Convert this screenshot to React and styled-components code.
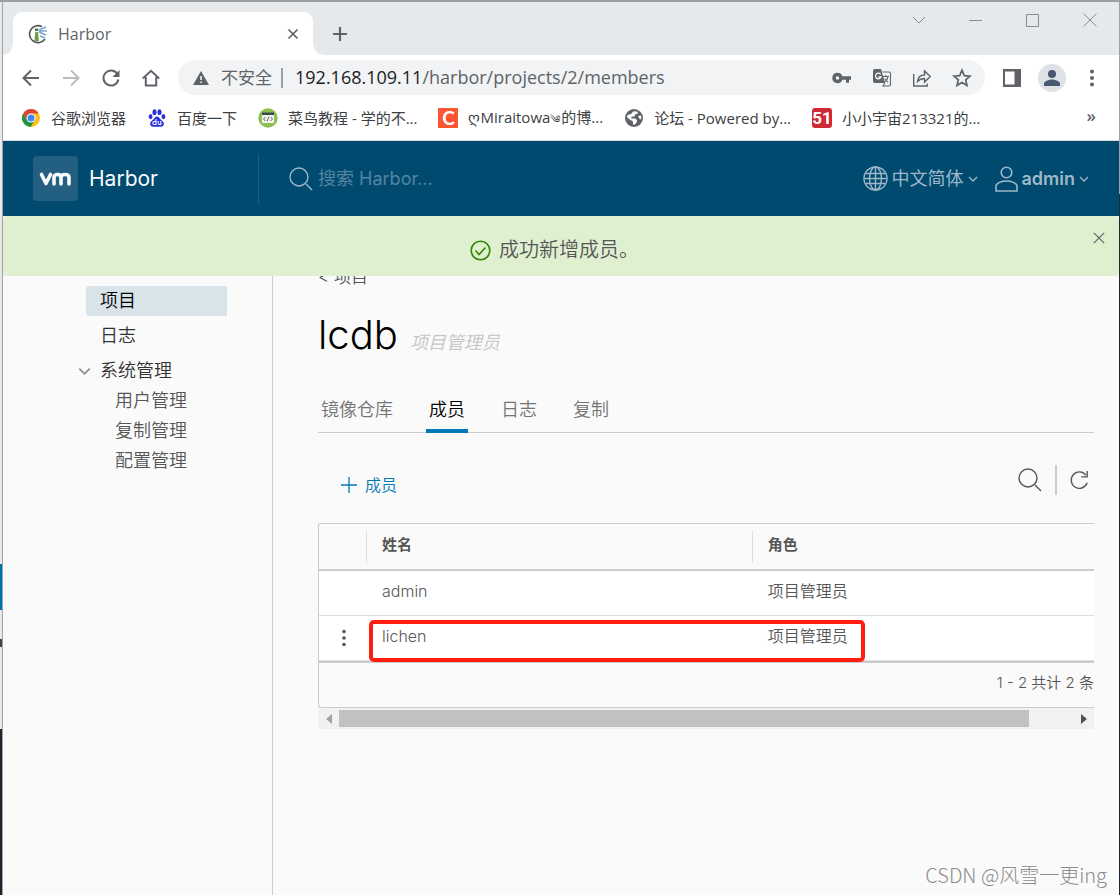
import React from "react";
import styled, { createGlobalStyle, css } from "styled-components";

const ui = '"Open Sans", "Noto Sans CJK SC", sans-serif';
const brand = 'Inter, "Noto Sans CJK SC", sans-serif';

const GlobalStyle = createGlobalStyle`
  *, *::before, *::after { box-sizing: border-box; }
  body { margin: 0; background: #fafafa; font-family: ${brand}; }
  button { font: inherit; color: inherit; background: none; border: 0; padding: 0; }
  a { color: inherit; text-decoration: none; }
  svg { display: block; flex: none; }
`;

const Desktop = styled.div`
  position: relative;
  display: flex;
  min-height: 100vh;
  border-top: 2px solid #9f9f9f;
  overflow: hidden;
`;

const Behind = styled.div`
  width: 3px;
  flex: none;
  border-right: 1px solid #a3a3a3;
  background: linear-gradient(
    #e8e8e8 562px, #0072ab 562px, #0072ab 608px, #e8e8e8 608px,
    #e8e8e8 637px, #444 637px, #444 645px, #e8e8e8 645px,
    #e8e8e8 727px, #1f2430 727px
  );
`;

const Edge = styled.div`
  width: 1px;
  flex: none;
  background: linear-gradient(#a0a0a0 192px, #23272c 192px);
`;

const Window = styled.div`
  flex: 1;
  min-width: 0;
  display: flex;
  flex-direction: column;
`;

/* Browser frame */

const TabStrip = styled.div`
  display: flex;
  align-items: flex-start;
  height: 53px;
  padding: 0 1px 0 10px;
  background: #e5e9ec;
`;

const BrowserTab = styled.div`
  position: relative;
  display: flex;
  align-items: center;
  width: 300px;
  height: 43px;
  margin-top: 10px;
  padding: 0 13px 0 15px;
  gap: 10px;
  border-radius: 9px 9px 0 0;
  background: #fff;
  color: #5f6368;
  font: 16px/20px ${ui};
  &::before, &::after {
    content: "";
    position: absolute;
    bottom: 0;
    width: 10px;
    height: 10px;
  }
  &::before {
    right: 100%;
    background: radial-gradient(circle at 0 0, transparent 9px, #fff 10px);
  }
  &::after {
    left: 100%;
    background: radial-gradient(circle at 100% 0, transparent 9px, #fff 10px);
  }
`;

const TabTitle = styled.span`
  flex: 1;
`;

const IconButton = styled.button`
  display: flex;
  align-items: center;
  justify-content: center;
  flex: none;
  width: ${(p) => p.$w || 40}px;
  height: ${(p) => p.$h || 36}px;
  color: ${(p) => p.$color || "#5f6368"};
`;

const NewTab = styled(IconButton)`
  margin: 14px auto 0 9px;
`;

const Toolbar = styled.div`
  display: flex;
  align-items: center;
  height: 45px;
  padding: 0 7px 0 8px;
  background: #fff;
`;

const Omnibox = styled.div`
  flex: 1;
  min-width: 0;
  display: flex;
  align-items: center;
  height: 35px;
  margin: 0 7px;
  padding: 0 3px 0 14px;
  border-radius: 18px;
  background: #f1f3f4;
  color: #5f6368;
  font: 18px/24px ${ui};
`;

const Insecure = styled.span`
  margin: 0 8px 0 11px;
  white-space: nowrap;
  font-size: 17px;
  padding-right: 9px;
  border-right: 2px solid #9aa0a6;
  line-height: 20px;
`;

const Url = styled.div`
  flex: 1;
  min-width: 0;
  padding: 0 0 2px 4px;
  white-space: nowrap;
  b { font-weight: 400; color: #202124; }
`;

const Avatar = styled.span`
  display: flex;
  align-items: center;
  justify-content: center;
  width: 28px;
  height: 28px;
  border-radius: 50%;
  background: #dee1e6;
  color: #4a5770;
`;

const Bookmarks = styled.nav`
  display: flex;
  align-items: center;
  gap: 21px;
  height: 41px;
  padding: 0 23px 5px 18px;
  border-bottom: 1px solid #dadce0;
  background: #fff;
  color: #3c4043;
  font: 15px/20px ${ui};
  white-space: nowrap;
`;

const Bookmark = styled.a`
  display: flex;
  align-items: center;
  gap: 10px;
  small { font-size: 11px; }
`;

const Badge = styled.span`
  display: flex;
  align-items: center;
  justify-content: center;
  width: 20px;
  height: 20px;
  border-radius: ${(p) => p.$radius || 0}px;
  background: ${(p) => p.$bg};
  color: #fff;
  font: ${(p) => p.$font};
`;

const MoreMarks = styled.button`
  margin-left: auto;
  padding-bottom: 4px;
  && { font: 600 17px/20px ${ui}; color: #5f6368; }
`;

/* Harbor header */

const Header = styled.header`
  display: flex;
  align-items: center;
  height: 75px;
  padding: 0 30px;
  background: #004a70;
  color: #9db8c8;
`;

const Brand = styled.a`
  display: flex;
  align-items: center;
  gap: 11px;
  width: 226px;
  height: 50px;
  border-right: 1px solid #1d5f81;
  color: #fafafa;
  font: 21px/30px ${brand};
`;

const Logo = styled.span`
  display: flex;
  align-items: center;
  justify-content: center;
  width: 45px;
  height: 45px;
  border-radius: 4px;
  background: #235f80;
`;

const Search = styled.label`
  display: flex;
  align-items: center;
  flex: 1;
  gap: 5px;
  padding-left: 30px;
`;

const SearchInput = styled.input`
  flex: 1;
  min-width: 0;
  padding: 0;
  border: 0;
  outline: 0;
  background: transparent;
  color: #fafafa;
  font: 18px/26px ${brand};
  &::placeholder { color: #54859f; opacity: 1; }
`;

const HeaderMenu = styled.button`
  display: flex;
  align-items: center;
  gap: 4px;
  margin-left: 17px;
  && { font: ${(p) => (p.$bold ? 600 : 400)} 18px/24px ${brand}; }
`;

const Alert = styled.div`
  display: flex;
  align-items: flex-start;
  height: 60px;
  padding: 15px 14px 0;
  border-radius: 4px;
  background: #dff0d0;
  color: #565656;
`;

const AlertText = styled.div`
  flex: 1;
  display: flex;
  align-items: center;
  justify-content: center;
  gap: 8px;
  padding-top: 4px;
  font: 350 20px/30px ${brand};
  height: 34px;
`;

/* Harbor body */

const Body = styled.div`
  flex: 1;
  display: flex;
  overflow: hidden;
  background: #fafafa;
`;

const Sidebar = styled.nav`
  flex: none;
  width: 270px;
  padding: 10px 45px 0 83px;
  border-right: 1px solid #ccc;
  font-size: 18px;
  font-weight: 350;
  color: #313131;
`;

const NavLink = styled.a`
  display: block;
  height: 30px;
  line-height: 29px;
  margin-bottom: ${(p) => (p.$sub ? 0 : 5)}px;
  padding-left: ${(p) => (p.$sub ? 29 : 14)}px;
  color: ${(p) => (p.$sub ? "#565656" : "inherit")};
  ${(p) => p.$active && css`
    background: #d9e4ea;
    border-radius: 3px 0 0 3px;
    color: #000;
  `}
`;

const NavGroup = styled.button`
  && { font-weight: 350; }
  display: flex;
  align-items: center;
  gap: 9px;
  height: 30px;
  margin-left: -8px;
  line-height: 28px;
  svg { color: #8c8c8c; }
`;

const Main = styled.main`
  flex: 1;
  min-width: 0;
  padding: 0 25px 0 45px;
  color: #565656;
`;

const Back = styled.a`
  display: block;
  height: 26px;
  margin-top: -12px;
  font: 350 17px/26px ${brand};
`;

const TitleRow = styled.div`
  display: flex;
  align-items: baseline;
  gap: 12px;
  margin-top: 21px;
`;

const Title = styled.h1`
  margin: 0;
  color: #000;
  font: 300 40px/48px ${brand};
`;

const Role = styled.em`
  color: #c4c4c4;
  font-size: 18px;
  font-weight: 350;
`;

const Tabs = styled.div`
  display: flex;
  gap: 30px;
  height: 49px;
  margin-top: 25px;
  border-bottom: 1px solid #ccc;
`;

const Tab = styled.button`
  && { font: 350 18px/47px ${brand}; color: ${(p) => (p.$active ? "#000" : "#747474")}; }
  height: 49px;
  padding: 2px 3px 0;
  box-shadow: ${(p) => (p.$active ? "inset 0 -4px #0079b8" : "none")};
`;

const Actions = styled.div`
  display: flex;
  align-items: center;
  height: 90px;
  padding-left: 23px;
`;

const AddMember = styled.button`
  display: flex;
  align-items: center;
  gap: 8px;
  margin-right: auto;
  padding-top: 14px;
  && { font: 350 16px/24px ${brand}; color: #0079b8; }
`;

const Tools = styled.div`
  display: flex;
  align-items: center;
  padding-top: 4px;
`;

const Rule = styled.span`
  width: 2px;
  height: 30px;
  margin: 0 7px 0 13px;
  background: #ccc;
`;

const Grid = styled.div`
  position: relative;
  border: 1px solid #ccc;
  border-right: 0;
  border-radius: 3px 0 0 3px;
`;

const Table = styled.table`
  width: 100%;
  table-layout: fixed;
  border-collapse: separate;
  border-spacing: 0;
  text-align: left;
  border-bottom: 2px solid #ccc;
`;

const HeadCell = styled.th`
  width: ${(p) => p.$w};
  height: 47px;
  padding: 0;
  border-bottom: 2px solid #ccc;
  font: 700 15px/31px ${brand};
  span {
    display: block;
    height: 32px;
    line-height: 28px;
    padding-left: 15px;
    border-left: 1px solid #ddd;
  }
`;

const Cell = styled.td`
  height: 45px;
  padding: 0 0 4px 16px;
  border-bottom: 1px solid #ddd;
  background: #fff;
  font: 350 16px/24px ${brand};
`;

const RowMenu = styled.button`
  display: flex;
  width: 18px;
  padding-top: 3px;
  justify-content: center;
`;

const Pager = styled.div`
  height: 44px;
  font: 350 15px/40px ${brand};
  text-align: right;
`;

const Marker = styled.div`
  position: absolute;
  left: 50px;
  top: 96px;
  width: 64%;
  height: 42px;
  border: 4px solid #ff1d10;
  border-radius: 5px;
`;

const ScrollBar = styled.div`
  display: flex;
  align-items: center;
  height: 21px;
  background: #f1f1f1;
`;

const Track = styled.div`
  flex: 1;
`;

const Thumb = styled.div`
  width: 94%;
  height: 17px;
  background: #c1c1c1;
`;

const Watermark = styled.div`
  position: absolute;
  right: 13px;
  bottom: 6px;
  color: #8c8c8c;
  font: 300 20px/28px "Noto Sans CJK SC", sans-serif;
`;

/* Icons */

const Line = ({ w = 20, h = w, box, sw = 1, children, ...rest }) => (
  <svg width={w} height={h} viewBox={box || `0 0 ${w} ${h}`} fill="none" stroke="currentColor" strokeWidth={sw} aria-hidden="true" {...rest}>
    {children}
  </svg>
);

const Magnifier = () => (
  <Line w={24} sw={1.4}>
    <circle cx="10" cy="10" r="9" />
    <path d="M17 17l6 6" />
  </Line>
);

const Caret = ({ w = 10, sw = 1.3 }) => (
  <Line w={w} h={w * 0.8} box="0 0 10 8" sw={sw}>
    <path d="M1 2l4 4 4-4" />
  </Line>
);

const HarborIcon = () => (
  <Line w={20}>
    <path d="M14 2.600A8.500 8.500 0 1 0 17 15" stroke="#4f5356" strokeWidth="1.600" />
    <path d="M6.500 17l.8-9h2.800l.8 9z" fill="#6a9e45" stroke="none" />
    <path d="M7 4.500h3.200v2.500H7z" fill="#4c7d37" stroke="none" />
    <path d="M11 6l7-3M11 7h8M11 8l7 3M12 12l5 2" stroke="#7da5cf" strokeWidth="1.400" />
  </Line>
);

const ChromeIcon = () => (
  <svg width="20" height="20" viewBox="0 0 20 20" aria-hidden="true">
    <circle cx="10" cy="10" r="9" fill="#fbc116" />
    <path d="M2.200 5.500A9 9 0 0 0 9.500 19L14 12 6 12z" fill="#229342" />
    <path d="M2.200 5.500A9 9 0 0 1 17.800 5.500H10L6 12z" fill="#dc4437" />
    <circle cx="10" cy="10" r="4.500" fill="#fff" />
    <circle cx="10" cy="10" r="3.500" fill="#4285f4" />
  </svg>
);

const BaiduIcon = () => (
  <svg width="20" height="20" viewBox="0 0 20 20" fill="#2932e1" aria-hidden="true">
    <ellipse cx="7.500" cy="4.200" rx="2" ry="2.900" />
    <ellipse cx="12.500" cy="4.200" rx="2" ry="2.900" />
    <ellipse cx="3.600" cy="8.600" rx="1.900" ry="2.600" />
    <ellipse cx="16.400" cy="8.600" rx="1.900" ry="2.600" />
    <path d="M10 8.500c2 0 2.600 2 4 3.300 1.600 1.400 3.200 2.500 2.800 4.700-.5 2.600-3.300 2.300-6.800 2.300s-6.300.3-6.800-2.300c-.4-2.200 1.200-3.300 2.800-4.700 1.400-1.300 2-3.300 4-3.300z" />
    <path d="M9 11v5.500H7.300a1.400 1.400 0 0 1 0-3H9M11.200 13v2.300q0 1.200 1.200 1.200h1.400V13" fill="none" stroke="#fff" strokeWidth="1.100" />
  </svg>
);

const RunoobIcon = () => (
  <svg width="20" height="20" viewBox="0 0 20 20" aria-hidden="true">
    <circle cx="10" cy="10" r="9.700" fill="#8cc152" />
    <path d="M4 5h12v10H4z" fill="#f4f6ee" />
    <path d="M4 4.500h12v2.500H4z" fill="#3c4a4f" />
    <path d="M7.500 9l-2 2 2 2M12.500 9l2 2-2 2M10.800 8.800l-1.600 4.400" fill="none" stroke="#55605a" />
  </svg>
);

const GlobeIcon = () => (
  <svg width="20" height="20" viewBox="0 0 20 20" aria-hidden="true">
    <circle cx="10" cy="10" r="9" fill="#5f6368" />
    <path d="M9.500 3.200l4.500.6-.5 2-2.500.7-.6 2H7.800L7 10.500h4l2 1.500-.3 2.500-2.200 2.300-1.500-.3v-3L6.500 12 3 9.300 3.500 7 7 6z" fill="#fff" />
    <path d="M14 8l3-.5.500 3-1.500 1z" fill="#fff" />
  </svg>
);

const bookmarks = [
  { id: "chrome", label: "谷歌浏览器", icon: <ChromeIcon /> },
  { id: "baidu", label: "百度一下", icon: <BaiduIcon /> },
  { id: "runoob", label: "菜鸟教程 - 学的不...", icon: <RunoobIcon /> },
  { id: "csdn", label: <>ღMiraitowa<small>༄</small>的博...</>, icon: <Badge $bg="#fc5531" $font='700 19px/20px Lato, sans-serif'>C</Badge> },
  { id: "forum", label: "论坛 - Powered by...", icon: <GlobeIcon /> },
  { id: "51cto", label: "小小宇宙213321的...", icon: <Badge $bg="#cf2a36" $radius={3} $font='700 17px/20px Roboto, sans-serif'>51</Badge> },
];

const members = [
  { name: "admin", role: "项目管理员" },
  { name: "lichen", role: "项目管理员", menu: true },
];

function BrowserFrame() {
  return (
    <>
      <TabStrip>
        <BrowserTab>
          <HarborIcon />
          <TabTitle>Harbor</TabTitle>
          <IconButton $w={14} $h={20} aria-label="关闭标签页">
            <Line w={12} sw={1.7}><path d="M1.500 1.500l9 9M10.500 1.500l-9 9" /></Line>
          </IconButton>
        </BrowserTab>
        <NewTab $w={36} aria-label="新标签页">
          <Line w={16} sw={2.2}><path d="M8 1v14M1 8h14" /></Line>
        </NewTab>
        <IconButton $w={57} $color="#8a8d90" aria-label="搜索标签页"><Line w={14} h={10}><path d="M1 2l6 6 6-6" /></Line></IconButton>
        <IconButton $w={57} $color="#8a8d90" aria-label="最小化"><Line w={13} h={3}><path d="M0 1.500h13" /></Line></IconButton>
        <IconButton $w={57} $color="#8a8d90" aria-label="最大化"><Line w={13}><path d="M.5.5h12v12H.5z" /></Line></IconButton>
        <IconButton $w={57} $color="#8a8d90" aria-label="关闭"><Line w={14}><path d="M.5.5l13 13M13.500.5l-13 13" /></Line></IconButton>
      </TabStrip>
      <Toolbar>
        <IconButton aria-label="后退"><Line w={18} sw={2}><path d="M17 9H2M9 1.500L1.500 9 9 16.500" /></Line></IconButton>
        <IconButton $color="#babcbe" aria-label="前进"><Line w={18} sw={2}><path d="M1 9h15M9 1.500L16.500 9 9 16.500" /></Line></IconButton>
        <IconButton aria-label="重新加载">
          <Line w={18} sw={2}>
            <path d="M15.500 5.200A7.500 7.500 0 1 0 16.400 10.500" />
            <path d="M17.500 1v7h-7z" fill="currentColor" stroke="none" />
          </Line>
        </IconButton>
        <IconButton aria-label="主页"><Line w={18} sw={2}><path d="M.8 9.500L9 1.800l8.200 7.700M3.800 8v8.500h10.400V8" /></Line></IconButton>
        <Omnibox>
          <svg width="18" height="18" viewBox="0 0 18 18" fill="#5f6368" aria-hidden="true">
            <path fillRule="evenodd" d="M9 2l8 14H1zM8.200 7v4h1.600V7zm0 5.500V14h1.600v-1.500z" />
          </svg>
          <Insecure>不安全</Insecure>
          <Url><b>192.168.109.11</b>/harbor/projects/2/members</Url>
          <IconButton aria-label="密码">
            <svg width="20" height="12" viewBox="0 0 20 12" fill="currentColor"><path fillRule="evenodd" d="M5.500.8a5.200 5.200 0 1 0 4.900 7H12v0h2v3h3V7.800h2V4.200h-8.600A5.200 5.200 0 0 0 5.500.8zm0 3.400a1.800 1.800 0 1 1 0 3.600 1.800 1.800 0 0 1 0-3.600z" /></svg>
          </IconButton>
          <IconButton aria-label="翻译">
            <svg width="20" height="20" viewBox="0 0 20 20" fill="currentColor">
              <path d="M3 1h6l4 14H3a2 2 0 0 1-2-2V3a2 2 0 0 1 2-2z" />
              <path d="M10.500 4H17a1.500 1.500 0 0 1 1.500 1.500v11A1.500 1.500 0 0 1 17 18h-6l1.800-3M10.500 8.500H17M13.700 7v1.500M16 8.500c-.5 3-2 5-4 6M12.500 10.500l3.700 4" fill="none" stroke="currentColor" strokeWidth="1.100" />
              <path d="M8.600 6.300A2.800 2.800 0 1 0 9 9H6.500" fill="none" stroke="#fff" strokeWidth="1.300" />
            </svg>
          </IconButton>
          <IconButton aria-label="分享">
            <Line w={20} sw={1.4}><path d="M1.700 6v12h13.500v-2.500M5.500 13.500c.5-4 3-6.500 7-6.500V3l5.800 5.500-5.800 5.500v-3.500c-3 0-5 1-7 3z" /></Line>
          </IconButton>
          <IconButton aria-label="收藏">
            <Line w={20} sw={1.7}><path d="M10 2.200l2.300 5.400 5.800.5-4.400 3.800 1.300 5.700-5-3-5 3 1.300-5.700L1.900 8.100l5.800-.5z" /></Line>
          </IconButton>
        </Omnibox>
        <IconButton aria-label="侧边栏">
          <svg width="18" height="18" viewBox="0 0 18 18" fill="currentColor"><path fillRule="evenodd" d="M0 0h18v18H0zM2 2.500v13h9.500v-13z" /></svg>
        </IconButton>
        <IconButton aria-label="用户">
          <Avatar>
            <svg width="18" height="18" viewBox="0 0 18 18" fill="currentColor"><circle cx="9" cy="5" r="4" /><path d="M1 17v-2c0-3 5-4.500 8-4.500s8 1.500 8 4.500v2z" /></svg>
          </Avatar>
        </IconButton>
        <IconButton aria-label="菜单">
          <svg width="4" height="18" viewBox="0 0 4 18" fill="currentColor"><circle cx="2" cy="2.500" r="2" /><circle cx="2" cy="9" r="2" /><circle cx="2" cy="15.500" r="2" /></svg>
        </IconButton>
      </Toolbar>
      <Bookmarks>
        {bookmarks.map((b) => (
          <Bookmark key={b.id} href="#">{b.icon}<span>{b.label}</span></Bookmark>
        ))}
        <MoreMarks>»</MoreMarks>
      </Bookmarks>
    </>
  );
}

export default function App() {
  return (
    <Desktop>
      <GlobalStyle />
      <Behind />
      <Window>
        <BrowserFrame />
        <Header>
          <Brand href="#">
            <Logo>
              <Line w={33} h={14} sw={3.6} strokeLinecap="round" strokeLinejoin="round">
                <path d="M2.500 2.500L7 11.500l4.500-9M15 12V5.500q0-3 3.500-3t3.500 3V12M22 5.500q0-3 4-3t4 3V12" />
              </Line>
            </Logo>
            Harbor
          </Brand>
          <Search>
            <Magnifier />
            <SearchInput type="text" placeholder="搜索 Harbor..." aria-label="搜索 Harbor" />
          </Search>
          <HeaderMenu>
            <Line w={25} sw={1.4}>
              <circle cx="12.500" cy="12.500" r="11.500" />
              <ellipse cx="12.500" cy="12.500" rx="6" ry="11.500" />
              <path d="M12.500 1v23M1.500 12.500h22M3 7.500h19M3 17.500h19" />
            </Line>
            中文简体
            <Caret />
          </HeaderMenu>
          <HeaderMenu $bold>
            <Line w={23} h={26} sw={1.6}>
              <circle cx="11.500" cy="6.500" r="5.300" />
              <path d="M1 25v-5c0-3 6-5 10.500-5S22 17 22 20v5z" />
            </Line>
            admin
            <Caret />
          </HeaderMenu>
        </Header>
        <Alert role="status">
          <AlertText>
            <Line w={21} sw={1.6}>
              <circle cx="10.500" cy="10.500" r="9.300" stroke="#318700" />
              <path d="M5.500 10.500l3.500 4 6.500-7" stroke="#318700" />
            </Line>
            成功新增成员。
          </AlertText>
          <IconButton $w={13} $h={14} aria-label="关闭提示">
            <Line w={12} sw={1.2}><path d="M.8.8l10.400 10.400M11.200.8L.8 11.200" /></Line>
          </IconButton>
        </Alert>
        <Body>
          <Sidebar>
            <NavLink href="#" $active>项目</NavLink>
            <NavLink href="#">日志</NavLink>
            <NavGroup><Caret w={13} />系统管理</NavGroup>
            <NavLink href="#" $sub>用户管理</NavLink>
            <NavLink href="#" $sub>复制管理</NavLink>
            <NavLink href="#" $sub>配置管理</NavLink>
          </Sidebar>
          <Main>
            <Back href="#">&lt; 项目</Back>
            <TitleRow>
              <Title>lcdb</Title>
              <Role>项目管理员</Role>
            </TitleRow>
            <Tabs role="tablist">
              {["镜像仓库", "成员", "日志", "复制"].map((t) => (
                <Tab key={t} role="tab" $active={t === "成员"}>{t}</Tab>
              ))}
            </Tabs>
            <Actions>
              <AddMember>
                <Line w={16} sw={1.3}><path d="M8 0v16M0 8h16" /></Line>
                成员
              </AddMember>
              <Tools>
                <IconButton $w={24} $h={24} $color="#565656" aria-label="搜索"><Magnifier /></IconButton>
                <Rule />
                <IconButton $w={30} $h={24} $color="#565656" aria-label="刷新">
                  <Line w={20} box="0 0 22 22" sw={1.5}>
                    <path d="M18.500 5.500A9 9 0 1 0 20 14M20 1v6.500h-6.500" />
                  </Line>
                </IconButton>
              </Tools>
            </Actions>
            <Grid>
              <Table>
                <thead>
                  <tr>
                    <HeadCell $w="47px" aria-label="操作" />
                    <HeadCell $w="53%"><span>姓名</span></HeadCell>
                    <HeadCell $w="47%"><span>角色</span></HeadCell>
                  </tr>
                </thead>
                <tbody>
                  {members.map((m) => (
                    <tr key={m.name}>
                      <Cell>
                        {m.menu && (
                          <RowMenu aria-label="更多操作">
                            <svg width="4" height="18" viewBox="0 0 4 18" fill="#565656"><circle cx="2" cy="2.500" r="1.800" /><circle cx="2" cy="9" r="1.800" /><circle cx="2" cy="15.500" r="1.800" /></svg>
                          </RowMenu>
                        )}
                      </Cell>
                      <Cell>{m.name}</Cell>
                      <Cell>{m.role}</Cell>
                    </tr>
                  ))}
                </tbody>
              </Table>
              <Pager>1 - 2 共计 2 条</Pager>
              <Marker />
            </Grid>
            <ScrollBar>
              <IconButton $w={21} $h={21} $color="#a3a3a3" aria-label="向左滚动">
                <svg width="6" height="10" fill="currentColor"><path d="M6 0v10L0 5z" /></svg>
              </IconButton>
              <Track><Thumb /></Track>
              <IconButton $w={21} $h={21} $color="#505050" aria-label="向右滚动">
                <svg width="6" height="10" fill="currentColor"><path d="M0 0v10l6-5z" /></svg>
              </IconButton>
            </ScrollBar>
          </Main>
        </Body>
      </Window>
      <Edge />
      <Watermark>CSDN @风雪一更ing</Watermark>
    </Desktop>
  );
}
